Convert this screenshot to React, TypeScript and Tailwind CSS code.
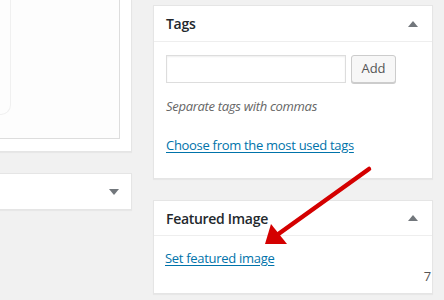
import React from "react";

function Caret({ up }: { up?: boolean }) {
  return (
    <svg width="10" height="6" viewBox="0 0 10 6" className="text-[#72777c]">
      {up ? <path d="M5 0L10 6H0z" fill="currentColor" /> : <path d="M0 0H10L5 6z" fill="currentColor" />}
    </svg>
  );
}

export default function App() {
  return (
    <div className="relative w-[444px] h-[300px] overflow-hidden bg-[#f1f1f1] font-['Open_Sans',_'Noto_Sans',sans-serif] text-[13px] tracking-[-0.3px] text-[#444]">
      <div className="flex gap-[21px]">
        {/* left column */}
        <div className="w-[132px] shrink-0 flex flex-col gap-[21px]">
          <div className="h-[152px] bg-white border-r border-b border-[#e5e5e5] shadow-[0_1px_1px_rgba(0,0,0,0.04)] pr-[11px] pb-[12px]">
            <div className="h-full bg-[#fdfdfd] border-r border-b border-[#dddddd] overflow-hidden">
              <div className="w-[11px] h-[115px] border-r border-b border-[#f0f0f0] rounded-br-[10px]" />
            </div>
          </div>
          <div className="h-[37px] bg-white border-t border-r border-b border-[#e5e5e5] shadow-[0_1px_1px_rgba(0,0,0,0.04)] flex items-center justify-end pr-[12px]">
            <Caret />
          </div>
        </div>

        {/* right column */}
        <div className="w-[280px] shrink-0 flex flex-col gap-[21px] pt-[5px]">
          <div className="h-[174px] bg-white border border-[#e5e5e5] shadow-[0_1px_1px_rgba(0,0,0,0.04)]">
            <div className="h-[36px] border-b border-[#eeeeee] flex items-center justify-between pl-[12px] pr-[14px]">
              <span className="text-[14px] font-semibold text-[#23282d]">Tags</span>
              <Caret up />
            </div>
            <div className="pl-[12px] pt-[13px]">
              <div className="flex items-center gap-[5px]">
                <div className="w-[180px] h-[28px] bg-white border border-[#dddddd] shadow-[inset_0_1px_2px_rgba(0,0,0,0.07)]" />
                <div className="w-[45px] h-[28px] flex items-center justify-center bg-[#f7f7f7] border border-[#cccccc] rounded-[3px] shadow-[0_1px_0_#cccccc] text-[#555] tracking-normal">
                  Add
                </div>
              </div>
              <p className="mt-[14px] italic text-[#666]">Separate tags with commas</p>
              <p className="mt-[19px]">
                <span className="text-[#0073aa] underline underline-offset-2">Choose from the most used tags</span>
              </p>
            </div>
          </div>

          <div className="h-[94px] bg-white border border-[#e5e5e5] shadow-[0_1px_1px_rgba(0,0,0,0.04)] overflow-hidden">
            <div className="h-[35px] border-b border-[#eeeeee] flex items-center justify-between pl-[12px] pr-[14px]">
              <span className="text-[14px] font-semibold text-[#23282d]">Featured Image</span>
              <Caret up />
            </div>
            <p className="pl-[11px] pt-[13px]">
              <span className="text-[#0073aa] underline underline-offset-2">Set featured image</span>
            </p>
            <div className="flex justify-end -mt-[1px]">
              <span className="text-[13px] leading-[16px] text-[#555] mr-[1px]">7</span>
            </div>
          </div>
        </div>
      </div>

      {/* annotation arrow */}
      <svg className="absolute left-0 top-0 pointer-events-none" width="444" height="300">
        <line x1="369" y1="169" x2="277" y2="235" stroke="#d40000" strokeWidth="4.5" strokeLinecap="round" />
        <path d="M265 244L271 224L287 244z" fill="#d40000" />
      </svg>
    </div>
  );
}
